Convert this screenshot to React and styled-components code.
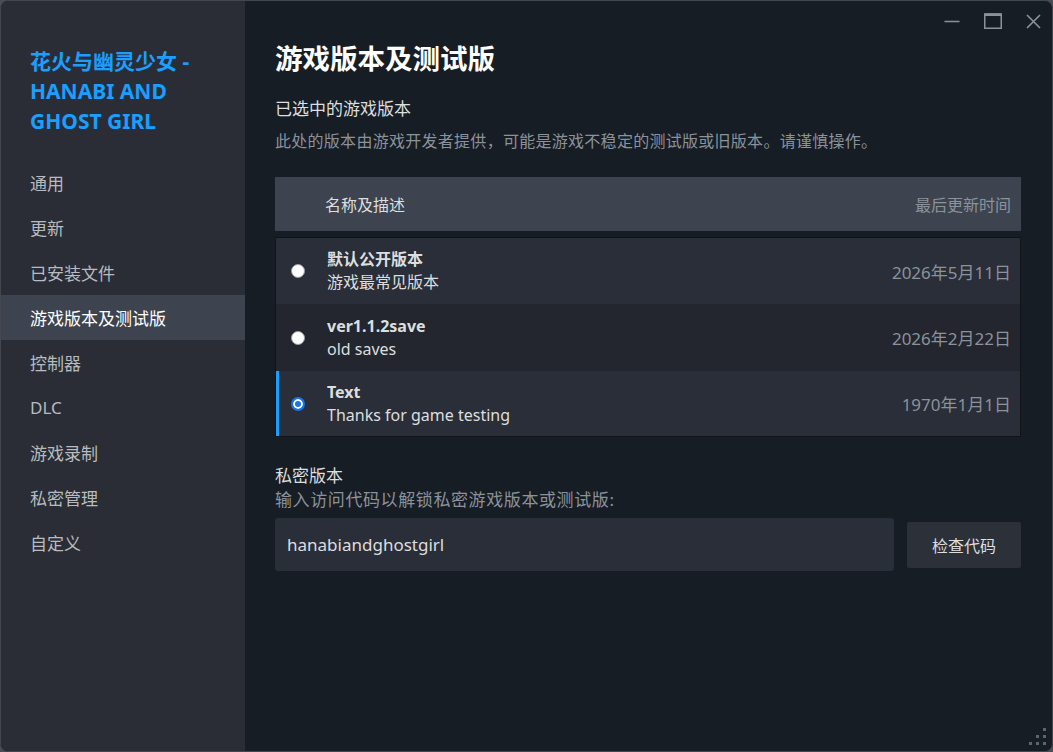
import React from "react";
import styled, { createGlobalStyle } from "styled-components";

const Global = createGlobalStyle`
  html, body, #root { height: 100%; }
  body {
    margin: 0;
    background: #4a4d54;
    font-family: "Noto Sans", "Noto Sans CJK SC", sans-serif;
  }
  * { box-sizing: border-box; }
`;

const Window = styled.div`
  position: relative;
  height: 100vh;
  display: flex;
  border: 1px solid #44474e;
  border-radius: 8px;
  overflow: hidden;
  background: #171d25;
`;

const Sidebar = styled.nav`
  width: 244px;
  flex-shrink: 0;
  background: #2a2d35;
  display: flex;
  flex-direction: column;
  padding-top: 45px;
`;

const GameTitle = styled.h1`
  margin: 0 0 24px;
  padding: 0 40px 0 29px;
  font-size: 21px;
  line-height: 30px;
  font-weight: 700;
  color: #1a9fff;
`;

const NavItem = styled.div`
  height: 45px;
  display: flex;
  align-items: center;
  padding-left: 29px;
  font-size: 17px;
  color: ${p => (p.$active ? "#ffffff" : "#b8bcbf")};
  background: ${p => (p.$active ? "#3d4450" : "transparent")};
`;

const Main = styled.main`
  flex: 1;
  display: flex;
  flex-direction: column;
  padding: 0 31px 0 30px;
`;

const TitleBar = styled.div`
  height: 40px;
  display: flex;
  justify-content: flex-end;
  margin-right: -33px;
`;

const WinButton = styled.div`
  width: 41px;
  height: 40px;
  display: flex;
  align-items: center;
  justify-content: center;
  color: #8d9299;
`;

const PageTitle = styled.h2`
  margin: 1px 0 0;
  font-size: 27.5px;
  line-height: 34px;
  font-weight: 700;
  color: #ffffff;
`;

const SectionLabel = styled.div`
  margin-top: ${p => p.$mt || 0}px;
  font-size: 17px;
  line-height: 24px;
  color: #dcdedf;
`;

const Hint = styled.div`
  margin-top: ${p => p.$mt || 0}px;
  font-size: ${p => p.$size || 16}px;
  letter-spacing: ${p => p.$ls || 0}px;
  line-height: 22px;
  color: #8b929a;
`;

const TableHead = styled.div`
  margin-top: 25px;
  height: 54px;
  display: flex;
  align-items: center;
  justify-content: space-between;
  padding: 0 10px 0 50px;
  background: #3d4450;
  font-size: 16px;
  color: #dcdedf;
`;

const HeadRight = styled.span`
  color: #8b929a;
`;

const Rows = styled.div`
  margin-top: 6px;
  border: 1px solid #10141a;
  display: flex;
  flex-direction: column;
`;

const Row = styled.div`
  height: ${p => p.$h}px;
  display: flex;
  align-items: center;
  padding: 0 9px 0 ${p => (p.$selected ? 12 : 15)}px;
  background: ${p => (p.$alt ? "#23262e" : "#2a2e38")};
  border-left: ${p => (p.$selected ? "3px solid #1a9fff" : "none")};
`;

const Radio = styled.span`
  width: 14px;
  height: 14px;
  border-radius: 50%;
  flex-shrink: 0;
  background: ${p => (p.$checked ? "#1a73e8" : "#ffffff")};
  border: ${p => (p.$checked ? "2px solid #1a73e8" : "1px solid #9a9ea4")};
  box-shadow: ${p => (p.$checked ? "inset 0 0 0 2px #ffffff" : "none")};
`;

const RowText = styled.div`
  flex: 1;
  margin-left: 22px;
  display: flex;
  flex-direction: column;
`;

const RowName = styled.span`
  font-size: 16px;
  line-height: 23px;
  font-weight: 700;
  color: #dcdedf;
`;

const RowDesc = styled.span`
  font-size: 16px;
  line-height: 23px;
  color: #dcdedf;
`;

const RowDate = styled.span`
  font-size: 17px;
  color: #8b929a;
`;

const CodeRow = styled.div`
  margin-top: 7px;
  display: flex;
  align-items: center;
  gap: 13px;
`;

const CodeInput = styled.div`
  flex: 1;
  height: 53px;
  display: flex;
  align-items: center;
  padding-left: 12px;
  background: #2a2e38;
  border-radius: 3px;
  font-size: 17px;
  color: #dcdedf;
`;

const CheckButton = styled.div`
  width: 114px;
  height: 46px;
  display: flex;
  align-items: center;
  justify-content: center;
  background: #2c3039;
  border-radius: 2px;
  font-size: 16px;
  color: #dcdedf;
`;

const Grip = styled.svg`
  position: absolute;
  right: 5px;
  bottom: 5px;
`;

const nav = ["通用", "更新", "已安装文件", "游戏版本及测试版", "控制器", "DLC", "游戏录制", "私密管理", "自定义"];

const branches = [
  { name: "默认公开版本", desc: "游戏最常见版本", date: "2026年5月11日", h: 66 },
  { name: "ver1.1.2save", desc: "old saves", date: "2026年2月22日", h: 67, alt: true },
  { name: "Text", desc: "Thanks for game testing", date: "1970年1月1日", h: 65, selected: true },
];

export default function App() {
  return (
    <>
      <Global />
      <Window>
        <Sidebar>
          <GameTitle>花火与幽灵少女 - HANABI AND GHOST GIRL</GameTitle>
          {nav.map(n => (
            <NavItem key={n} $active={n === "游戏版本及测试版"}>{n}</NavItem>
          ))}
        </Sidebar>
        <Main>
          <TitleBar>
            <WinButton>
              <svg width="16" height="16" viewBox="0 0 16 16">
                <line x1="0.5" y1="8.5" x2="15.5" y2="8.5" stroke="currentColor" strokeWidth="1.5" />
              </svg>
            </WinButton>
            <WinButton>
              <svg width="18" height="16" viewBox="0 0 18 16">
                <rect x="0.75" y="1" width="16.5" height="14.25" fill="none" stroke="currentColor" strokeWidth="1.5" />
                <line x1="0.75" y1="1.75" x2="17.25" y2="1.75" stroke="currentColor" strokeWidth="2.5" />
              </svg>
            </WinButton>
            <WinButton>
              <svg width="15" height="15" viewBox="0 0 15 15">
                <path d="M1 1 L14 14 M14 1 L1 14" stroke="currentColor" strokeWidth="1.6" />
              </svg>
            </WinButton>
          </TitleBar>
          <PageTitle>游戏版本及测试版</PageTitle>
          <SectionLabel $mt={21}>已选中的游戏版本</SectionLabel>
          <Hint $mt={9} $ls={0.28}>此处的版本由游戏开发者提供，可能是游戏不稳定的测试版或旧版本。请谨慎操作。</Hint>
          <TableHead>
            <span>名称及描述</span>
            <HeadRight>最后更新时间</HeadRight>
          </TableHead>
          <Rows>
            {branches.map(b => (
              <Row key={b.name} $h={b.h} $alt={b.alt} $selected={b.selected}>
                <Radio $checked={b.selected} />
                <RowText>
                  <RowName>{b.name}</RowName>
                  <RowDesc>{b.desc}</RowDesc>
                </RowText>
                <RowDate>{b.date}</RowDate>
              </Row>
            ))}
          </Rows>
          <SectionLabel $mt={27}>私密版本</SectionLabel>
          <Hint $mt={1} $size={17} $ls={0.6}>输入访问代码以解锁私密游戏版本或测试版:</Hint>
          <CodeRow>
            <CodeInput>hanabiandghostgirl</CodeInput>
            <CheckButton>检查代码</CheckButton>
          </CodeRow>
        </Main>
        <Grip width="18" height="18" viewBox="0 0 18 18">
          <g fill="#5f636b">
            <rect x="14" y="0" width="3" height="3" />
            <rect x="7" y="7" width="3" height="3" />
            <rect x="14" y="7" width="3" height="3" />
            <rect x="0" y="14" width="3" height="3" />
            <rect x="7" y="14" width="3" height="3" />
            <rect x="14" y="14" width="3" height="3" />
          </g>
        </Grip>
      </Window>
    </>
  );
}
